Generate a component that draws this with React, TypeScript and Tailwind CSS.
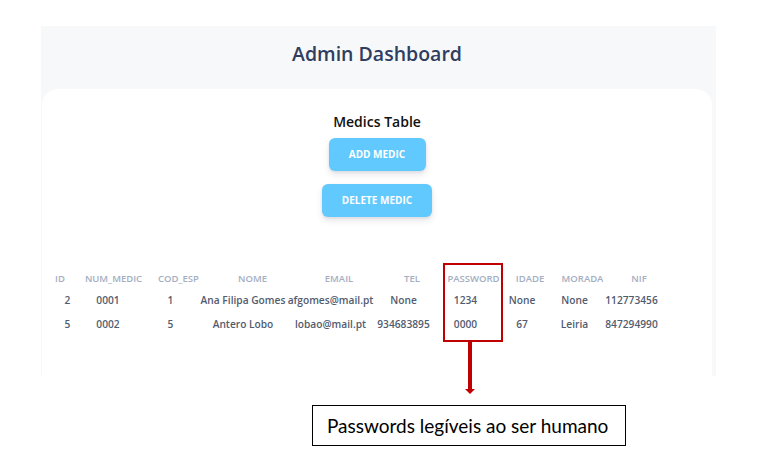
import React from "react";

const cols = "grid grid-cols-[15px_66px_59px_86px_89px_57px_67px_46px_59px_55px]";

const headers: [string, string][] = [
  ["ID", "-translate-x-[7.5px]"],
  ["NUM_MEDIC", "translate-x-[5.5px]"],
  ["COD_ESP", "translate-x-[8px]"],
  ["NOME", "translate-x-[9.5px]"],
  ["EMAIL", "translate-x-[8.5px]"],
  ["TEL", "translate-x-[8.5px]"],
  ["PASSWORD", "translate-x-[8px]"],
  ["IDADE", "translate-x-[8px]"],
  ["MORADA", "translate-x-[8px]"],
  ["NIF", "translate-x-[7.5px]"],
];
const rows = [
  ["2", "0001", "1", "Ana Filipa Gomes", "afgomes@mail.pt", "None", "1234", "None", "None", "112773456"],
  ["5", "0002", "5", "Antero Lobo", "lobao@mail.pt", "934683895", "0000", "67", "Leiria", "847294990"],
];

export default function App() {
  return (
    <div
      className="relative w-[775px] h-[466px] bg-white overflow-hidden"
      style={{ fontFamily: '"Open Sans", "Noto Sans", sans-serif' }}
    >
      <div className="ml-[41px] mt-[26px] w-[675px] h-[350px] bg-[#f7f8fa] overflow-hidden pl-px pr-[4px]">
        <h1 className="pt-[18px] h-[37px] text-[19.5px] leading-none text-[#2f3d5e] text-center font-semibold">
          Admin Dashboard
        </h1>
        <div className="mt-[26px] h-[400px] bg-white rounded-t-[16px] pt-[26px] flex flex-col items-center">
          <h2 className="text-[14px] leading-none font-semibold text-[#111111]">Medics Table</h2>
          <button className="mt-[9px] w-[97px] h-[33px] rounded-[6px] bg-[#62c9fe] text-white text-[10px] font-bold shadow-[0_4px_6px_rgba(50,50,93,0.11),0_1px_3px_rgba(0,0,0,0.08)]">
            ADD MEDIC
          </button>
          <button className="mt-[13px] w-[110px] h-[33px] rounded-[6px] bg-[#62c9fe] text-white text-[10px] font-bold shadow-[0_4px_6px_rgba(50,50,93,0.11),0_1px_3px_rgba(0,0,0,0.08)]">
            DELETE MEDIC
          </button>
          <div className="self-start ml-[18px] mt-[52px]">
            <div className={`${cols} h-[19px] items-center`}>
              {headers.map(([h, t]) => (
                <div key={h} className="flex justify-center whitespace-nowrap">
                  <span className={`${t} text-[9.5px] leading-none font-semibold text-[#a3aec2]`}>{h}</span>
                </div>
              ))}
            </div>
            {rows.map((r, i) => (
              <div key={i} className={`${cols} h-[24px] items-center`}>
                {r.map((c, j) => (
                  <div key={j} className="flex justify-center whitespace-nowrap text-[10.2px] leading-none font-semibold text-[#525c70]">
                    {c}
                  </div>
                ))}
              </div>
            ))}
          </div>
        </div>
      </div>

      <div
        className="mt-[29px] ml-[312px] w-[314px] h-[41px] border border-black flex items-center pl-[14px] text-[19px] leading-none text-black"
        style={{ fontFamily: 'Lato, "Liberation Sans", sans-serif' }}
      >
        Passwords legíveis ao ser humano
      </div>

      <div className="absolute left-[443px] top-[263px] w-[60px] h-[79px] border-2 border-[#c00000]" />
      <svg className="absolute left-[464px] top-[341px]" width="12" height="54" viewBox="0 0 12 54">
        <rect x="4" y="0" width="4" height="49" fill="#c00000" />
        <polygon points="1,48 11,48 6,53" fill="#c00000" />
      </svg>
    </div>
  );
}
